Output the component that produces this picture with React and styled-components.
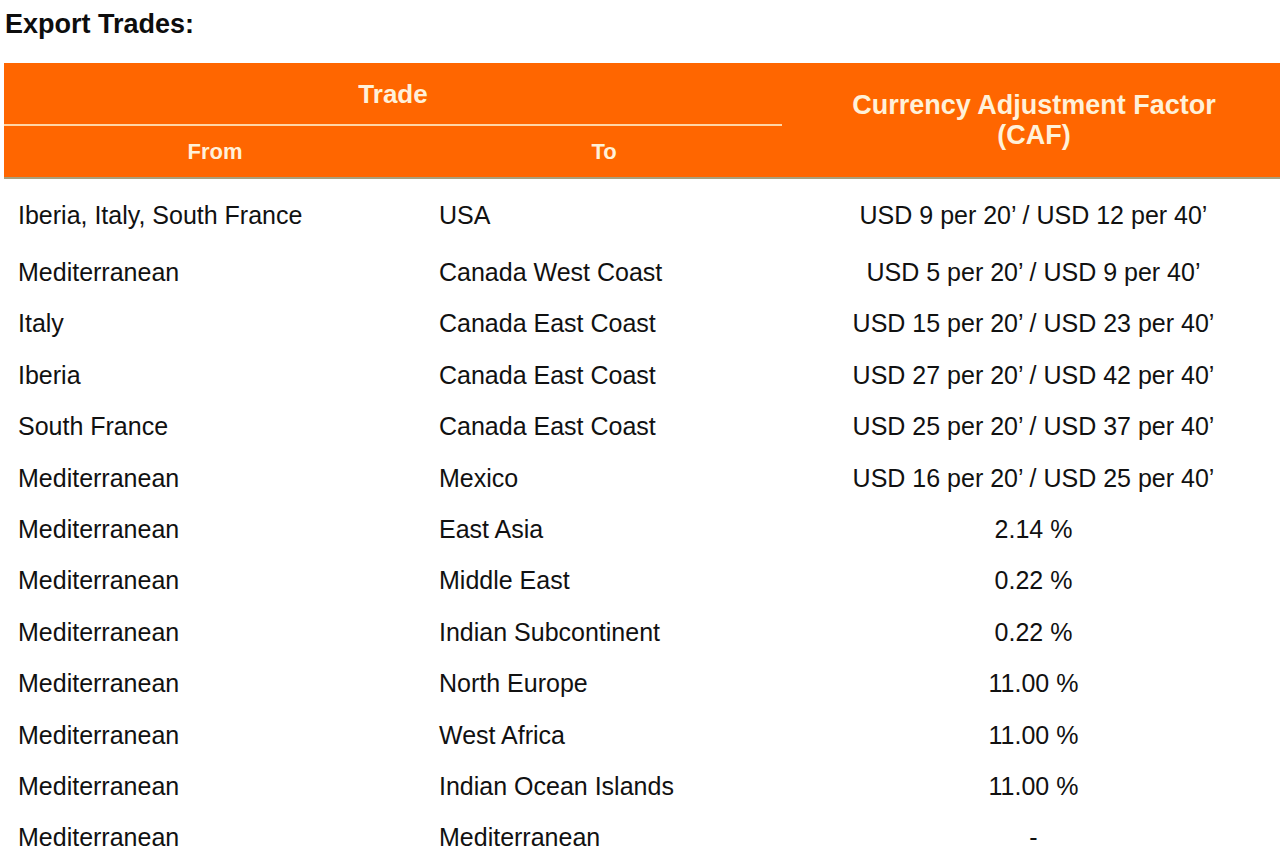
import React from "react"
import styled, { createGlobalStyle } from "styled-components"

const GlobalStyle = createGlobalStyle`
	body {
		margin: 0;
		background: #ffffff;
		overflow: hidden;
		font-family: "Liberation Sans", Arial, sans-serif;
	}
`

const Page = styled.div`
	padding: 9px 0 0 4px;
	width: 1282px;
`

const Title = styled.h2`
	margin: 0 0 24px 1px;
	font-size: 27px;
	line-height: 30px;
	font-weight: bold;
	color: #0d0d0d;
`

const Table = styled.table`
	width: 1282px;
	table-layout: fixed;
	border-collapse: collapse;
	border-spacing: 0;
`

const Head = styled.thead`
	background: #ff6600;
	border-bottom: 2px solid #a9a07c;
`

const HeadCell = styled.th`
	padding: 0;
	color: #fff1d9;
	font-weight: bold;
	font-size: ${props => props.size || 22}px;
	line-height: ${props => props.lh || 30}px;
	text-align: center;
	vertical-align: middle;
	height: ${props => props.h ? props.h + "px" : "auto"};
	border-bottom: ${props => props.split ? "2px solid #ffd6a6" : "none"};
`

const Row = styled.tr`
	td {
		height: 51.4px;
		padding-top: ${props => props.first ? "10px" : "0"};
		padding-bottom: ${props => props.first ? "6px" : "0"};
	}
`

const Cell = styled.td`
	font-size: 25px;
	line-height: 30px;
	color: #111111;
	vertical-align: middle;
	white-space: nowrap;
	text-align: ${props => props.center ? "center" : "left"};
	padding-left: ${props => props.indent || 0}px;
`

const rows = [
	["Iberia, Italy, South France", "USA", "USD 9 per 20’ / USD 12 per 40’"],
	["Mediterranean", "Canada West Coast", "USD 5 per 20’ / USD 9 per 40’"],
	["Italy", "Canada East Coast", "USD 15 per 20’ / USD 23 per 40’"],
	["Iberia", "Canada East Coast", "USD 27 per 20’ / USD 42 per 40’"],
	["South France", "Canada East Coast", "USD 25 per 20’ / USD 37 per 40’"],
	["Mediterranean", "Mexico", "USD 16 per 20’ / USD 25 per 40’"],
	["Mediterranean", "East Asia", "2.14 %"],
	["Mediterranean", "Middle East", "0.22 %"],
	["Mediterranean", "Indian Subcontinent", "0.22 %"],
	["Mediterranean", "North Europe", "11.00 %"],
	["Mediterranean", "West Africa", "11.00 %"],
	["Mediterranean", "Indian Ocean Islands", "11.00 %"],
	["Mediterranean", "Mediterranean", "-"]
]

const App = () => {
	return (
		<Page>
			<GlobalStyle />
			<Title>Export Trades:</Title>
			<Table>
				<colgroup>
					<col style={{ width: 422 }} />
					<col style={{ width: 356 }} />
					<col style={{ width: 504 }} />
				</colgroup>
				<Head>
					<tr>
						<HeadCell colSpan={2} size={26} h={61} split>
							Trade
						</HeadCell>
						<HeadCell rowSpan={2} size={27}>
							Currency Adjustment Factor
							<br />
							(CAF)
						</HeadCell>
					</tr>
					<tr>
						<HeadCell h={51}>From</HeadCell>
						<HeadCell h={51}>To</HeadCell>
					</tr>
				</Head>
				<tbody>
					{rows.map(([from, to, caf], i) => (
						<Row key={i} first={i === 0}>
							<Cell indent={14}>{from}</Cell>
							<Cell indent={13}>{to}</Cell>
							<Cell center>{caf}</Cell>
						</Row>
					))}
				</tbody>
			</Table>
		</Page>
	)
}

export default App
